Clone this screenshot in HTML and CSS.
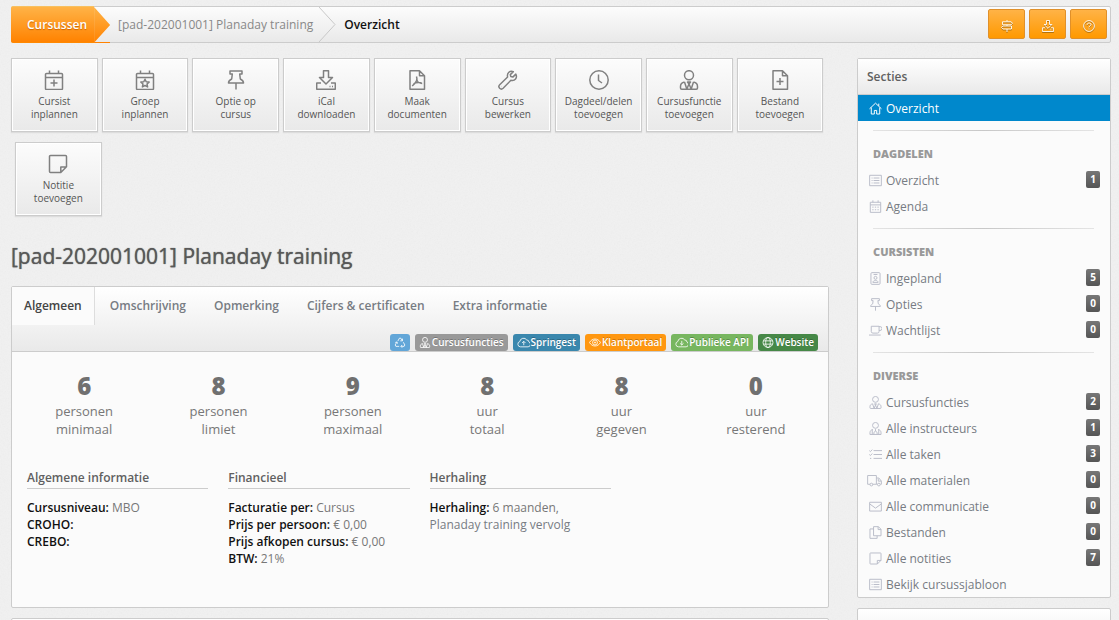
FILE: index.html
```html
<!DOCTYPE html>
<html lang="nl">
<head>
<meta charset="utf-8">
<title>Planaday training - Overzicht</title>
<link rel="stylesheet" href="styles.css">
</head>
<body>
<svg class="sprite" aria-hidden="true">
  <symbol id="i-calplus" viewBox="0 0 20 20"><path d="M2.5 3.5h15a1 1 0 0 1 1 1v14a1 1 0 0 1-1 1h-15a1 1 0 0 1-1-1v-14a1 1 0 0 1 1-1zM1.5 7.500h17M5.500 0.500v3M14.500 0.500v3M10 9.500v7M6.500 13h7"/></symbol>
  <symbol id="i-calstar" viewBox="0 0 20 20"><path d="M2.500 3.500h15a1 1 0 0 1 1 1v14a1 1 0 0 1-1 1h-15a1 1 0 0 1-1-1v-14a1 1 0 0 1 1-1zM1.500 7.500h17M5.500 0.500v3M14.500 0.500v3M10 9.200l1.200 2.600 2.900.3-2.100 1.900.6 2.900-2.600-1.400-2.600 1.400.6-2.900-2.100-1.900 2.900-.3z"/></symbol>
  <symbol id="i-pin" viewBox="0 0 20 20"><path d="M4 1h12v3h-2.300l.6 5c1.900.9 3.200 2.300 3.200 4h-15c0-1.700 1.300-3.100 3.200-4l.6-5H4zM10 13v6.500"/></symbol>
  <symbol id="i-download" viewBox="0 0 20 20"><path d="M7.500 .800h5v6.700h4L10 14 3.500 7.500h4zM5 13H.700v6.200h18.600V13H15M13.500 16.500h1M16 16.500h1"/></symbol>
  <symbol id="i-pdf" viewBox="0 0 20 20"><path d="M3 .800h9.500l5 5v13.400H3zM12.500 .800v5h5M9.500 6.500c1 3 .5 5-4.300 9.500M9.700 9c.5 3 2.500 4.500 5.500 4.500M6.500 13.800c2-1.200 4.500-1.500 8-1"/></symbol>
  <symbol id="i-wrench" viewBox="0 0 20 20"><path d="M17.800 4.100l-3 3-2-.5-.5-2 3-3C12 .200 8.600 3 9.600 7L1.700 14.800a2.400 2.400 0 0 0 3.400 3.500l7.800-8c4 1 6.800-2.500 4.900-6.200zM3.500 16.400h.2"/></symbol>
  <symbol id="i-clock" viewBox="0 0 20 20"><circle cx="10" cy="10" r="9.200"/><path d="M9.500 4.500v6l3.500 2.500"/></symbol>
  <symbol id="i-usertie" viewBox="0 0 20 20"><circle cx="10" cy="5.200" r="4.500"/><path d="M5.500 12C3 12.500 1.500 14 1.500 16.500V18c0 .8.400 1.200 1.200 1.200h14.600c.8 0 1.200-.4 1.200-1.200v-1.500c0-2.500-1.500-4-4-4.500M5.500 12l2.300 7L10 14l2.200 5 2.300-7M8.500 12h3L10 14z"/></symbol>
  <symbol id="i-useradm" viewBox="0 0 20 20"><circle cx="10" cy="5.200" r="4.500"/><path d="M6 11.500c-3 .5-4.500 2.500-4.500 5v2.700h17v-2.700c0-2.500-1.500-4.500-4.500-5M5 12v7M15 12v7M7.500 19v-3l2.500-2 2.500 2v3M10 11v3"/></symbol>
  <symbol id="i-fileplus" viewBox="0 0 20 20"><path d="M3 .800h9.500l5 5v13.400H3zM12.500 .800v5h5M10 8v7M6.500 11.500h7"/></symbol>
  <symbol id="i-note" viewBox="0 0 20 20"><path d="M2.500 1.500h15a1 1 0 0 1 1 1v10.300l-5.700 5.700H2.500a1 1 0 0 1-1-1v-15a1 1 0 0 1 1-1zM18.500 13h-5.700v5.500"/></symbol>
  <symbol id="i-home" viewBox="0 0 20 20"><path d="M.800 10.500L10 1.800l9.200 8.700M3.500 8.500v10h4.700v-5.500h3.600v5.500h4.700v-10M15 6V2.500"/></symbol>
  <symbol id="i-list" viewBox="0 0 20 20"><path d="M1 2h18v16H1zM4 6.200h1.500M7 6.200h9M4 10h1.500M7 10h9M4 13.800h1.500M7 13.800h9"/></symbol>
  <symbol id="i-cal" viewBox="0 0 20 20"><path d="M2 3.500h16V19H2zM2 7.500h16M6 .500v3M14 .500v3M5 11h2M9 11h2M13 11h2M5 15h2M9 15h2M13 15h2"/></symbol>
  <symbol id="i-badge" viewBox="0 0 20 20"><rect x="3" y="1" width="14" height="18" rx="1.500"/><circle cx="10" cy="9" r="2.300"/><path d="M7 3.800h6M6 16c0-4 8-4 8 0z"/></symbol>
  <symbol id="i-cup" viewBox="0 0 20 20"><path d="M3.500 3.500h12v8a2.500 2.500 0 0 1-2.500 2.500H6a2.500 2.500 0 0 1-2.500-2.500zM15.500 4h1.500a2.500 2.500 0 0 1 0 6h-1.500M0 17h18"/></symbol>
  <symbol id="i-tasks" viewBox="0 0 20 20"><path d="M7 4h13M7 10h13M7 16h13M.500 4l1.700 1.600L5 2.500M.500 10l1.700 1.600L5 8.500M1.500 16h2"/></symbol>
  <symbol id="i-truck" viewBox="0 0 24 20"><path d="M5 16H1V2h14v14H9M15 6h4l4 5v5h-1.500M15 16h1.500M18 7v4h5"/><circle cx="7" cy="16.500" r="2.200"/><circle cx="19" cy="16.500" r="2.200"/></symbol>
  <symbol id="i-mail" viewBox="0 0 20 20"><path d="M1 3.500h18v13.500H1zM1 6l9 6.500L19 6"/></symbol>
  <symbol id="i-copy" viewBox="0 0 20 20"><path d="M7 1h7.500l4 4v10H7zM14 1v4.500h4.500M7 4.500H1.500V19h11v-4"/></symbol>
  <symbol id="i-sign" viewBox="0 0 20 20"><path d="M10 0v3M10 8v2M10 15v5M2.500 3H17l2 2.500L17 8H2.500zM17.500 10H3l-2 2.500L3 15h14.500z"/></symbol>
  <symbol id="i-help" viewBox="0 0 20 20"><circle cx="10" cy="10" r="9"/><path d="M7 8c0-4 6.300-3.700 6.300-.3 0 2.300-3.100 2.300-3.100 4.600M10.100 14.200v1.500"/></symbol>
  <symbol id="i-recycle" viewBox="0 0 20 20"><path d="M6 7.500l3-5.300h2.500L14 6.500M14.500 3v4h-4M16 9.500l2.800 5-1.300 2.500H12M14 14.500L11.500 17l2.500 2.500M8.500 17h-6L1.200 14.500l3-5M1.500 10l3-1 1 3"/></symbol>
  <symbol id="i-cloudup" viewBox="0 0 24 20"><path d="M6.500 18a5 5 0 0 1-1.300-9.800A7 7 0 0 1 18 5.300a4 4 0 0 1 4 3.700A4.700 4.700 0 0 1 20.500 18zM12.500 15V8M9.300 11l3.200-3.200 3.200 3.200"/></symbol>
  <symbol id="i-clouddown" viewBox="0 0 24 20"><path d="M6.500 18a5 5 0 0 1-1.300-9.800A7 7 0 0 1 18 5.300a4 4 0 0 1 4 3.700A4.700 4.700 0 0 1 20.500 18zM12.500 7v7.500M9.300 11.500l3.200 3.200 3.200-3.200"/></symbol>
  <symbol id="i-eye" viewBox="0 0 22 20"><path d="M1 10c4.500-8.500 15.500-8.500 20 0-4.500 8.500-15.500 8.500-20 0z"/><circle cx="11" cy="10" r="4.500"/><circle cx="11" cy="10" r="1.200"/></symbol>
  <symbol id="i-globe" viewBox="0 0 20 20"><circle cx="10" cy="10" r="9"/><ellipse cx="10" cy="10" rx="4.200" ry="9"/><path d="M1.500 7h17M1.500 13h17"/></symbol>
</svg>

<div class="page">
  <header class="topbar">
    <nav class="crumbs" aria-label="Kruimelpad">
      <a class="crumb crumb-root" href="#">Cursussen</a>
      <a class="crumb" href="#">[pad-202001001] Planaday training</a>
      <svg class="chevron" viewBox="0 0 17 35" aria-hidden="true"><path d="M0 0L16 17.500L0 35"/></svg>
      <span class="crumb crumb-current">Overzicht</span>
    </nav>
    <div class="top-actions">
      <button type="button" aria-label="Wegwijzer"><svg><use href="#i-sign"/></svg></button>
      <button type="button" aria-label="Downloaden"><svg><use href="#i-download"/></svg></button>
      <button type="button" aria-label="Help"><svg><use href="#i-help"/></svg></button>
    </div>
  </header>

  <div class="columns">
    <main>
      <div class="toolbar">
        <button type="button"><svg><use href="#i-calplus"/></svg>Cursist<br>inplannen</button>
        <button type="button"><svg><use href="#i-calstar"/></svg>Groep<br>inplannen</button>
        <button type="button"><svg><use href="#i-pin"/></svg>Optie op<br>cursus</button>
        <button type="button"><svg><use href="#i-download"/></svg>iCal<br>downloaden</button>
        <button type="button"><svg><use href="#i-pdf"/></svg>Maak<br>documenten</button>
        <button type="button"><svg><use href="#i-wrench"/></svg>Cursus<br>bewerken</button>
        <button type="button"><svg><use href="#i-clock"/></svg>Dagdeel/delen<br>toevoegen</button>
        <button type="button"><svg><use href="#i-usertie"/></svg>Cursusfunctie<br>toevoegen</button>
        <button type="button"><svg><use href="#i-fileplus"/></svg>Bestand<br>toevoegen</button>
        <button type="button"><svg><use href="#i-note"/></svg>Notitie<br>toevoegen</button>
      </div>

      <h1>[pad-202001001] Planaday training</h1>

      <section class="panel course">
        <div class="panel-head">
          <nav class="tabs">
            <a class="active" href="#">Algemeen</a>
            <a href="#">Omschrijving</a>
            <a href="#">Opmerking</a>
            <a href="#">Cijfers &amp; certificaten</a>
            <a href="#">Extra informatie</a>
          </nav>
          <div class="labels">
            <span class="label sky"><svg><use href="#i-recycle"/></svg></span>
            <span class="label gray"><svg><use href="#i-usertie"/></svg>Cursusfuncties</span>
            <span class="label blue"><svg class="wide"><use href="#i-cloudup"/></svg>Springest</span>
            <span class="label orange"><svg><use href="#i-eye"/></svg>Klantportaal</span>
            <span class="label lime"><svg class="wide"><use href="#i-clouddown"/></svg>Publieke API</span>
            <span class="label green"><svg><use href="#i-globe"/></svg>Website</span>
          </div>
        </div>
        <div class="stats">
          <div><strong>6</strong>personen<br>minimaal</div>
          <div><strong>8</strong>personen<br>limiet</div>
          <div><strong>9</strong>personen<br>maximaal</div>
          <div><strong>8</strong>uur<br>totaal</div>
          <div><strong>8</strong>uur<br>gegeven</div>
          <div><strong>0</strong>uur<br>resterend</div>
        </div>
        <div class="info">
          <section>
            <h2>Algemene informatie</h2>
            <p><b>Cursusniveau:</b> MBO</p>
            <p><b>CROHO:</b></p>
            <p><b>CREBO:</b></p>
          </section>
          <section>
            <h2>Financieel</h2>
            <p><b>Facturatie per:</b> Cursus</p>
            <p><b>Prijs per persoon:</b> € 0,00</p>
            <p><b>Prijs afkopen cursus:</b> € 0,00</p>
            <p><b>BTW:</b> 21%</p>
          </section>
          <section>
            <h2>Herhaling</h2>
            <p><b>Herhaling:</b> 6 maanden,</p>
            <p><a href="#">Planaday training vervolg</a></p>
          </section>
        </div>
      </section>
      <section class="panel next"></section>
    </main>

    <aside>
      <nav class="panel sections">
        <h2 class="side-head">Secties</h2>
        <a class="item active" href="#"><svg><use href="#i-home"/></svg>Overzicht</a>
        <hr>
        <h3>Dagdelen</h3>
        <a class="item" href="#"><svg><use href="#i-list"/></svg>Overzicht<span class="count">1</span></a>
        <a class="item" href="#"><svg><use href="#i-cal"/></svg>Agenda</a>
        <hr>
        <h3>Cursisten</h3>
        <a class="item" href="#"><svg><use href="#i-badge"/></svg>Ingepland<span class="count">5</span></a>
        <a class="item" href="#"><svg><use href="#i-pin"/></svg>Opties<span class="count">0</span></a>
        <a class="item" href="#"><svg><use href="#i-cup"/></svg>Wachtlijst<span class="count">0</span></a>
        <hr>
        <h3>Diverse</h3>
        <a class="item" href="#"><svg><use href="#i-usertie"/></svg>Cursusfuncties<span class="count">2</span></a>
        <a class="item" href="#"><svg><use href="#i-useradm"/></svg>Alle instructeurs<span class="count">1</span></a>
        <a class="item" href="#"><svg><use href="#i-tasks"/></svg>Alle taken<span class="count">3</span></a>
        <a class="item" href="#"><svg class="truck"><use href="#i-truck"/></svg>Alle materialen<span class="count">0</span></a>
        <a class="item" href="#"><svg><use href="#i-mail"/></svg>Alle communicatie<span class="count">0</span></a>
        <a class="item" href="#"><svg><use href="#i-copy"/></svg>Bestanden<span class="count">0</span></a>
        <a class="item" href="#"><svg><use href="#i-note"/></svg>Alle notities<span class="count">7</span></a>
        <a class="item" href="#"><svg><use href="#i-list"/></svg>Bekijk cursussjabloon</a>
      </nav>
      <section class="panel next"></section>
    </aside>
  </div>
</div>
</body>
</html>
```
FILE: styles.css
```css
* { box-sizing: border-box; }

html { height: 100%; overflow: hidden; }

body {
  margin: 0;
  min-height: 100%;
  background-color: #f1f1f1;
  background-image: url("data:image/svg+xml,%3Csvg xmlns='http://www.w3.org/2000/svg' width='120' height='120'%3E%3Cfilter id='n'%3E%3CfeTurbulence type='fractalNoise' baseFrequency='.7' numOctaves='2' stitchTiles='stitch'/%3E%3CfeColorMatrix type='saturate' values='0'/%3E%3C/filter%3E%3Crect width='120' height='120' filter='url(%23n)' opacity='.08'/%3E%3C/svg%3E");
  color: #777;
  font: 12px/17px "Open Sans", "Noto Sans", sans-serif;
}

a { color: inherit; text-decoration: none; }
h1, h2, h3, p { margin: 0; font-weight: 600; }
p { font-weight: 400; }
button { font: inherit; cursor: pointer; }

svg { fill: none; stroke: currentColor; stroke-width: 1.5; stroke-linejoin: round; }
.sprite { display: none; }

.page { padding: 6px 8px 0 11px; }

/* Top bar */
.topbar {
  display: flex;
  justify-content: space-between;
  height: 37px;
  border: 1px solid #ccc;
  border-radius: 2px;
  background: linear-gradient(#fcfcfc, #e9e9e9);
}
.crumbs { display: flex; font-size: 12px; line-height: 35px; color: #888; }
.crumb-root {
  position: relative;
  margin: -1px 24px -1px -1px;
  padding: 0 7px 0 16px;
  border-top: 1px solid #f8c060;
  border-bottom: 1px solid #ff8800;
  border-radius: 2px 0 0 2px;
  background: linear-gradient(#ffb347, #ff8200);
  color: #fff;
  font-weight: 600;
  text-shadow: 0 1px 1px #c60;
}
.crumb-root::after {
  content: "";
  position: absolute;
  top: 0;
  left: 100%;
  width: 16px;
  height: 36px;
  background: linear-gradient(#ffb347, #ff8200);
  clip-path: polygon(0 0, 100% 50%, 4% 97%, 100% 97%, 100% 100%, 0 100%);
}
.chevron { width: 17px; height: 35px; margin: 0 8px 0 6px; stroke: #c8c8c8; stroke-width: 1; }
.crumb-current { color: #111; font-weight: 600; }

.top-actions { display: flex; align-items: flex-start; gap: 4px; padding: 2px 3px; }
.top-actions button {
  display: grid;
  place-items: center;
  width: 37px;
  height: 30px;
  padding: 0;
  border: 1px solid #e0902a;
  border-radius: 2px;
  background: linear-gradient(#ffb347, #f90);
  color: #fff;
}
.top-actions svg { width: 12px; height: 12px; margin-top: 4px; filter: drop-shadow(0 1px 0 #a66a10); }

/* Columns */
.columns {
  display: grid;
  grid-template-columns: minmax(0, 1fr) 254px;
  gap: 28px;
  padding-top: 15px;
}

.toolbar { display: flex; flex-wrap: wrap; row-gap: 10px; }
.toolbar button {
  width: 10.6%;
  height: 74px;
  margin: 0 0 0 4px;
  padding: 0;
  border: 1px solid #ccc;
  background: linear-gradient(#fcfcfc, #e9e9e9);
  box-shadow: inset 0 0 0 1px #fff, 0 1px 1px #ddd;
  color: #555;
  font-size: 10px;
  line-height: 13px;
  text-align: center;
}
.toolbar button:first-child { margin-left: 0; }
.toolbar svg { display: block; width: 20px; height: 20px; margin: 0 auto 5px; color: #808080; }

h1 {
  padding: 26px 0 16px;
  color: #595959;
  font-size: 21px;
  font-weight: 500;
  line-height: 28px;
  text-shadow: 0 0 1px #595959;
}

.panel { border: 1px solid #ccc; border-radius: 2px; background: #fbfbfb; }
.next { height: 40px; margin-top: 10px; background: linear-gradient(#fff, #eee); }

/* Course panel */
.panel-head { border-bottom: 1px solid #ccc; background: linear-gradient(#fff, #e9e9e9); }
.tabs { display: flex; gap: 3px; font-size: 12px; font-weight: 600; line-height: 38px; }
.tabs a { padding: 0 12px; border-right: 1px solid transparent; color: #777c83; }
.tabs .active { border-color: #ddd; background: #fbfbfb; color: #444; }

.labels { display: flex; justify-content: flex-end; gap: 5px; padding: 9px 10px 0; }
.label {
  display: flex;
  align-items: center;
  gap: 1px;
  height: 17px;
  padding: 0 4px;
  border-radius: 3px;
  color: #fff;
  font-size: 10px;
  font-weight: 600;
  text-shadow: 0 -1px 0 rgba(0, 0, 0, .25);
}
.label svg { width: 12px; height: 11px; }
.label .wide { width: 13px; }
.sky { background: #62a6d8; }
.gray { background: #999; }
.blue { background: #3a87ad; }
.orange { background: #ff9710; }
.lime { background: #77b65f; }
.green { background: #468847; }

.stats {
  display: grid;
  grid-template-columns: repeat(6, 1fr);
  padding: 20px 5px 31px;
  font-size: 13px;
  line-height: 18px;
  text-align: center;
}
.stats strong { display: block; margin-bottom: 2px; color: #707070; font-size: 24px; font-weight: 800; line-height: 28px; }

.info { display: grid; grid-template-columns: repeat(4, 1fr); gap: 20px; padding: 0 16px 40px 15px; }
.info h2 { margin-bottom: 10px; padding-bottom: 2px; border-bottom: 1px solid #ccc; color: #606060; font-size: 12px; line-height: 17px; }
.info b { color: #111; font-weight: 600; }
.info a { color: #777c83; }

/* Sidebar */
.side-head {
  padding: 0 9px;
  border-bottom: 1px solid #ccc;
  background: linear-gradient(#fff, #e9e9e9);
  color: #606060;
  font-size: 12px;
  line-height: 35px;
}
.sections hr {
  height: 1px;
  margin: 9px 16px 0 15px;
  border: 0;
  background: linear-gradient(90deg, #e4e4e4, #c8c8c8 50%, #e4e4e4);
}
.sections h3 {
  padding: 10px 15px 0;
  color: #999;
  font-size: 11px;
  font-weight: 800;
  line-height: 26px;
  text-transform: uppercase;
}
.item { display: flex; align-items: center; gap: 4px; height: 26px; padding: 0 10px 0 11px; color: #777c83; font-size: 12px; }
.item svg { flex: none; width: 13px; height: 13px; color: #b9bcc8; overflow: visible; }
.item .truck { width: 15px; margin-left: -2px; }
.item.active { background: #08c; color: #fff; }
.item.active svg { color: #fff; }
.count {
  width: 14px;
  margin: 0 0 2px auto;
  border-radius: 2px;
  background: linear-gradient(#777, #555);
  color: #fff;
  font-size: 10px;
  font-weight: 700;
  line-height: 17px;
  text-align: center;
}
```
